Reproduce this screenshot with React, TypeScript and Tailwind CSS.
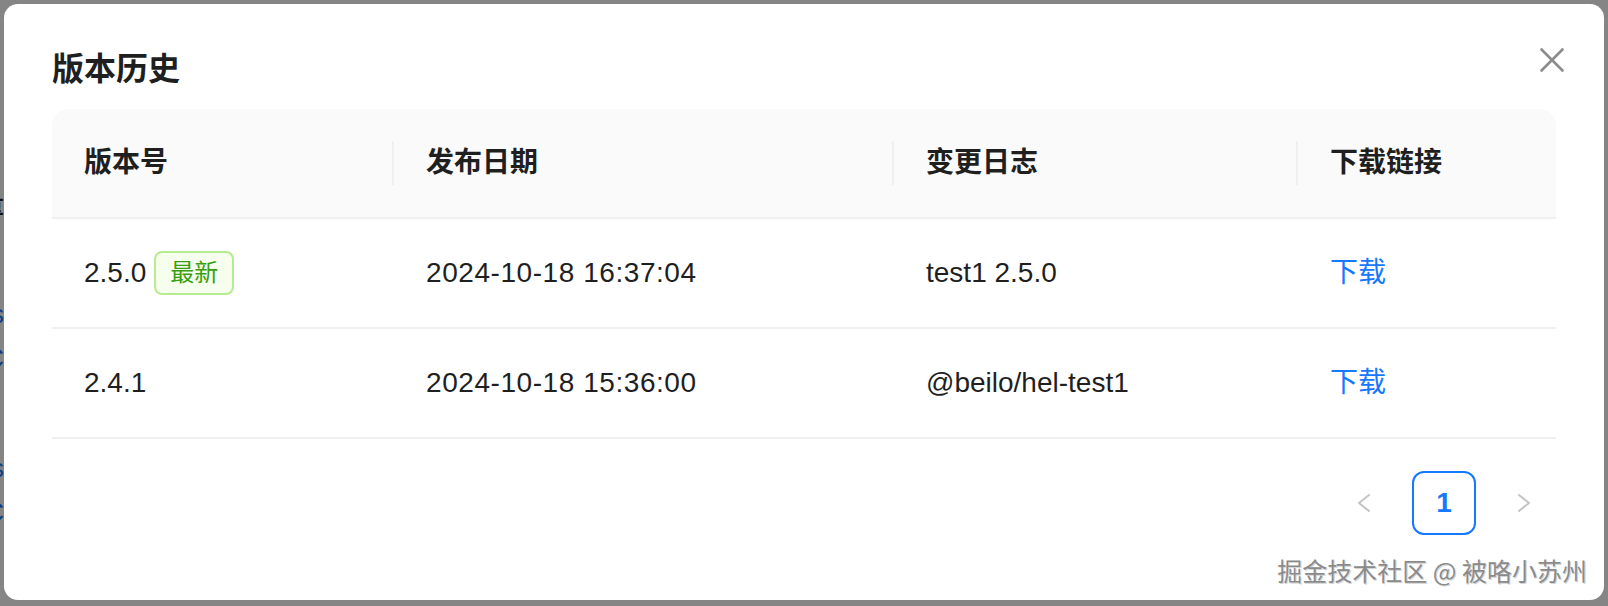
import { ReactNode } from 'react'

const FONT = "font-['Liberation_Sans','Noto_Sans_CJK_SC',sans-serif]"

interface Version {
  version: string
  date: string
  log: string
  latest?: boolean
}

const versions: Version[] = [
  { version: '2.5.0', date: '2024-10-18 16:37:04', log: 'test1 2.5.0', latest: true },
  { version: '2.4.1', date: '2024-10-18 15:36:00', log: '@beilo/hel-test1' },
]

const columns = ['版本号', '发布日期', '变更日志', '下载链接']
const grid = 'grid grid-cols-[340px_500px_404px_260px]'

function HeaderCell({ children, first }: { children: ReactNode; first?: boolean }) {
  return (
    <div className="flex items-center h-[108px]">
      {!first && <span className="w-[2px] h-[44px] bg-[#f0f0f0] shrink-0" />}
      <span className="pl-[32px]">{children}</span>
    </div>
  )
}

function Chevron({ dir }: { dir: 'left' | 'right' }) {
  return (
    <svg width="16" height="20" viewBox="0 0 16 20" fill="none" stroke="#c4c4c4" strokeWidth="2" strokeLinecap="round" strokeLinejoin="round">
      {dir === 'left' ? <polyline points="13,2 3,10 13,18" /> : <polyline points="3,2 13,10 3,18" />}
    </svg>
  )
}

export default function App() {
  return (
    <div className={`${FONT} w-[1608px] h-[606px] bg-[#858585] flex overflow-hidden relative`}>
      {/* page behind the mask: only a sliver shows at the left edge */}
      <div className="w-[4px] shrink-0 overflow-hidden flex flex-col items-end">
        <span className="mt-[190px] text-[26px] font-bold text-[#111] leading-[28px]">量</span>
        <span className="mt-[82px] text-[26px] text-[#0c3f86] leading-[28px]">s</span>
        <span className="mt-[16px] text-[26px] text-[#0c3f86] leading-[28px]">C</span>
        <span className="mt-[82px] text-[26px] text-[#0c3f86] leading-[28px]">s</span>
        <span className="mt-[16px] text-[26px] text-[#0c3f86] leading-[28px]">C</span>
      </div>

      <div className="mt-[4px] w-[1600px] h-[596px] bg-white rounded-[14px] px-[48px] pt-[41px] relative">
        <div className="flex items-center justify-between h-[48px] mb-[16px]">
          <h2 className="text-[32px] font-semibold text-[#1f1f1f] leading-[48px]">版本历史</h2>
          <button className="w-[24px] h-[24px] -mr-[8px] -mt-[18px] flex items-center justify-center">
            <svg width="24" height="24" viewBox="0 0 24 24" stroke="#8c8c8c" strokeWidth="2.6" strokeLinecap="round">
              <line x1="1.5" y1="1.5" x2="22.5" y2="22.5" />
              <line x1="22.5" y1="1.5" x2="1.5" y2="22.5" />
            </svg>
          </button>
        </div>

        {/* table */}
        <div className="text-[28px] text-[#1f1f1f]">
          <div className={`${grid} bg-[#fafafa] rounded-t-[16px] border-b-2 border-[#f0f0f0] font-semibold`}>
            {columns.map((c, i) => (
              <HeaderCell key={c} first={i === 0}>{c}</HeaderCell>
            ))}
          </div>
          {versions.map(v => (
            <div key={v.version} className={`${grid} h-[110px] border-b-2 border-[#f0f0f0] items-center`}>
              <div className="pl-[32px] flex items-center">
                <span>{v.version}</span>
                {v.latest && (
                  <span className="ml-[8px] h-[44px] px-[14px] border-2 border-[#b7eb8f] bg-[#f6ffed] text-[#389e0d] text-[24px] leading-[40px] rounded-[8px]">
                    最新
                  </span>
                )}
              </div>
              <div className="pl-[34px] tracking-[0.02em]">{v.date}</div>
              <div className="pl-[34px]">{v.log}</div>
              <div className="pl-[34px]">
                <a className="text-[#1677ff] cursor-pointer">下载</a>
              </div>
            </div>
          ))}
        </div>

        {/* pagination */}
        <div className="flex justify-end items-center gap-[16px] mt-[32px]">
          <button className="w-[64px] h-[64px] flex items-center justify-center">
            <Chevron dir="left" />
          </button>
          <button className="w-[64px] h-[64px] rounded-[12px] border-2 border-[#1677ff] text-[#1677ff] text-[28px] font-semibold flex items-center justify-center">
            1
          </button>
          <button className="w-[64px] h-[64px] flex items-center justify-center">
            <Chevron dir="right" />
          </button>
        </div>

        {/* watermark */}
        <div className="absolute right-[17px] bottom-[15px] text-[25px] leading-[30px] text-[#8a8a8a] [text-shadow:0_0_1px_#ffffff,1px_1px_0_#d0d0d0] font-['Noto_Sans_CJK_SC',sans-serif]">
          掘金技术社区 @ 被咯小苏州
        </div>
      </div>
    </div>
  )
}
